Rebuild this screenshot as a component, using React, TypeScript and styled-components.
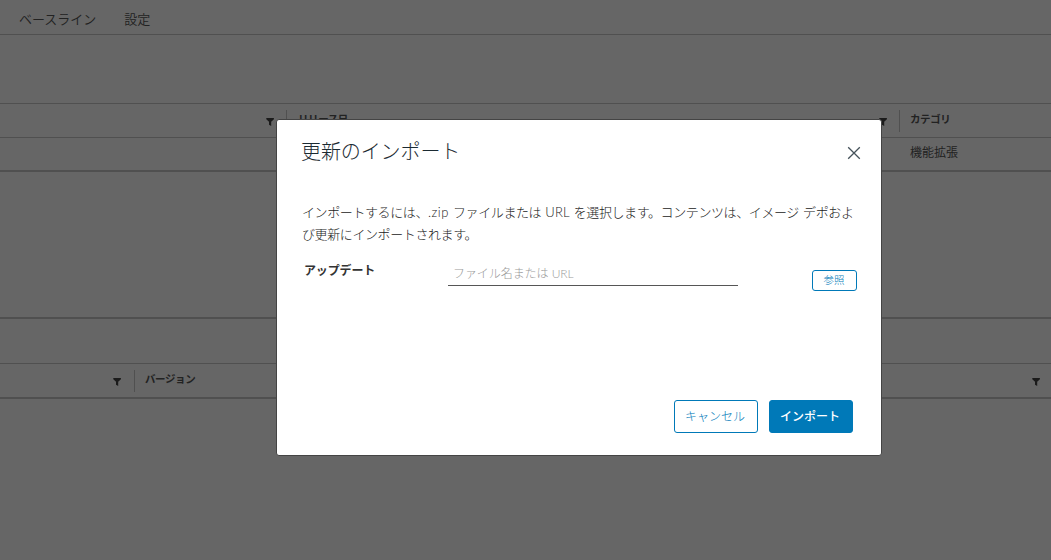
import React from 'react';
import styled, { createGlobalStyle } from 'styled-components';

const GlobalStyle = createGlobalStyle`
  * { box-sizing: border-box; }
  html, body { margin: 0; height: 100%; }
  body {
    background: #666;
    overflow: hidden;
    font-family: Lato, "Noto Sans CJK JP", sans-serif;
    color: #222;
  }
`;

const Page = styled.div`
  display: flex;
  flex-direction: column;
  width: 1051px;
  height: 560px;
  background: #666;
`;

const Nav = styled.nav`
  display: flex;
  align-items: center;
  gap: 28px;
  height: 35px;
  padding: 3px 0 0 19px;
  border-bottom: 1px solid #505050;
`;

const Tab = styled.a`
  font-size: 13px;
  font-weight: 350;
  line-height: 20px;
`;

const Grid = styled.section<{ $gap: number; $height: number }>`
  display: flex;
  flex-direction: column;
  margin-top: ${p => p.$gap}px;
  height: ${p => p.$height}px;
  border-top: 1px solid #505050;
  border-bottom: 2px solid #505050;
`;

const HeaderRow = styled.div`
  display: flex;
  flex: none;
  height: 33px;
  padding: 6px 0 5px;
`;

const HeaderCell = styled.div<{ $width?: number; $first?: boolean; $start?: number; $end: number }>`
  display: flex;
  justify-content: space-between;
  ${p => (p.$width ? `width: ${p.$width}px;` : 'flex: 1;')}
  padding: 0 ${p => p.$end}px 0 ${p => (p.$first ? 0 : p.$start ?? 10)}px;
  border-left: ${p => (p.$first ? 0 : 1)}px solid #505050;
  font-size: 10.5px;
  font-weight: 700;
  line-height: 18px;
  letter-spacing: -0.4px;
`;

const Row = styled.div`
  display: flex;
  height: 35px;
  border-top: 1px solid #505050;
  border-bottom: 2px solid #505050;
`;

const Cell = styled.div<{ $width?: number }>`
  ${p => (p.$width ? `width: ${p.$width}px;` : 'flex: 1;')}
  padding-left: 11px;
  font-size: 12px;
  font-weight: 400;
  line-height: 29px;
`;

const FilterSvg = styled.svg`
  width: 9px;
  height: 8px;
  margin: 8px 0 0 auto;
  fill: #1b1b1b;
`;

const Filter = () => (
  <FilterSvg viewBox="0 0 9 8">
    <path d="M0.3 0h7.6v1.2L5.2 3.8V8L3 6.8v-3L0.3 1.2z" />
  </FilterSvg>
);

const Overlay = styled.div`
  position: absolute;
  top: 0;
  left: 0;
  width: 1051px;
  height: 560px;
  padding: 119px 0 0 276px;
`;

const Dialog = styled.div`
  display: flex;
  flex-direction: column;
  width: 606px;
  height: 337px;
  padding: 0 24px 22px;
  background: #fff;
  border: 1px solid #444;
  border-radius: 3px;
`;

const TitleBar = styled.header`
  display: flex;
  justify-content: space-between;
  align-items: center;
  height: 64px;
  margin-right: -4px;
`;

const Title = styled.h1`
  margin: -2px 0 0;
  font-size: 20px;
  font-weight: 300;
  line-height: 24px;
  letter-spacing: -0.1px;
  color: #1b2a32;
`;

const CloseButton = styled.button`
  display: flex;
  padding: 0;
  margin-top: 1px;
  border: 0;
  background: none;
`;

const Message = styled.p`
  margin: 17px 0 0;
  padding-left: 1px;
  font-size: 13px;
  font-weight: 300;
  line-height: 22px;
  letter-spacing: -0.4px;
  word-spacing: 1px;
  white-space: nowrap;
  color: #222;
`;

const Latin = styled.span<{ $spacing: number }>`
  letter-spacing: ${p => p.$spacing}px;
`;

const Field = styled.div`
  display: flex;
  margin-top: 15px;
  padding-left: 3px;
  height: 32px;
`;

const Label = styled.label`
  width: 144px;
  padding-top: 1px;
  font-size: 12px;
  font-weight: 700;
  line-height: 20px;
  letter-spacing: -0.15px;
  color: #333;
`;

const Input = styled.div`
  width: 290px;
  height: 26px;
  padding: 4px 5px 0;
  border-bottom: 1px solid #565656;
  font-size: 12px;
  font-weight: 300;
  line-height: 20px;
  letter-spacing: -0.07px;
  color: #9a9a9a;
`;

const Button = styled.button<{ $primary?: boolean; $small?: boolean }>`
  width: ${p => (p.$small ? 45 : 84)}px;
  height: ${p => (p.$small ? 21 : 33)}px;
  margin: ${p => (p.$small ? '10px 0 0 74px' : '0')};
  padding: ${p => (p.$small ? '0 1px 0 0' : '0 2px 0 0')};
  border: 1px solid #0079b8;
  border-radius: 3px;
  background: ${p => (p.$primary ? '#0079b8' : '#fff')};
  color: ${p => (p.$primary ? '#fff' : '#0079b8')};
  font-family: inherit;
  font-size: ${p => (p.$small ? 10.5 : 12)}px;
  font-weight: ${p => (p.$primary ? 500 : 300)};
  line-height: 1;
`;

const Footer = styled.footer`
  display: flex;
  justify-content: flex-end;
  gap: 11px;
  margin-top: auto;
  padding-right: 4px;
`;

export default function App() {
  return (
    <>
      <GlobalStyle />
      <Page>
        <Nav>
          <Tab>ベースライン</Tab>
          <Tab>設定</Tab>
        </Nav>
        <Grid $gap={68} $height={216}>
          <HeaderRow>
            <HeaderCell $first $width={286} $end={11}><Filter /></HeaderCell>
            <HeaderCell $width={613} $start={11} $end={11}>リリース日<Filter /></HeaderCell>
            <HeaderCell $end={0}>カテゴリ</HeaderCell>
          </HeaderRow>
          <Row>
            <Cell $width={899} />
            <Cell>機能拡張</Cell>
          </Row>
        </Grid>
        <Grid $gap={44} $height={36}>
          <HeaderRow>
            <HeaderCell $first $width={134} $end={12}><Filter /></HeaderCell>
            <HeaderCell $end={10}>バージョン<Filter /></HeaderCell>
          </HeaderRow>
        </Grid>
      </Page>
      <Overlay>
        <Dialog role="dialog">
          <TitleBar>
            <Title>更新のインポート</Title>
            <CloseButton aria-label="閉じる">
              <svg width="14" height="14" viewBox="0 0 14 14" fill="none" stroke="#45525a" strokeWidth="1.3">
                <path d="M1.2 1.2l11.6 11.6M12.8 1.2L1.2 12.8" />
              </svg>
            </CloseButton>
          </TitleBar>
          <Message>
            インポートするには、<Latin $spacing={0.5}>.zip</Latin> ファイルまたは <Latin $spacing={0.1}>URL</Latin> を選択します。コンテンツは、イメージ デポおよ
            <br />
            び更新にインポートされます。
          </Message>
          <Field>
            <Label>アップデート</Label>
            <Input>ファイル名または URL</Input>
            <Button $small>参照</Button>
          </Field>
          <Footer>
            <Button>キャンセル</Button>
            <Button $primary>インポート</Button>
          </Footer>
        </Dialog>
      </Overlay>
    </>
  );
}
